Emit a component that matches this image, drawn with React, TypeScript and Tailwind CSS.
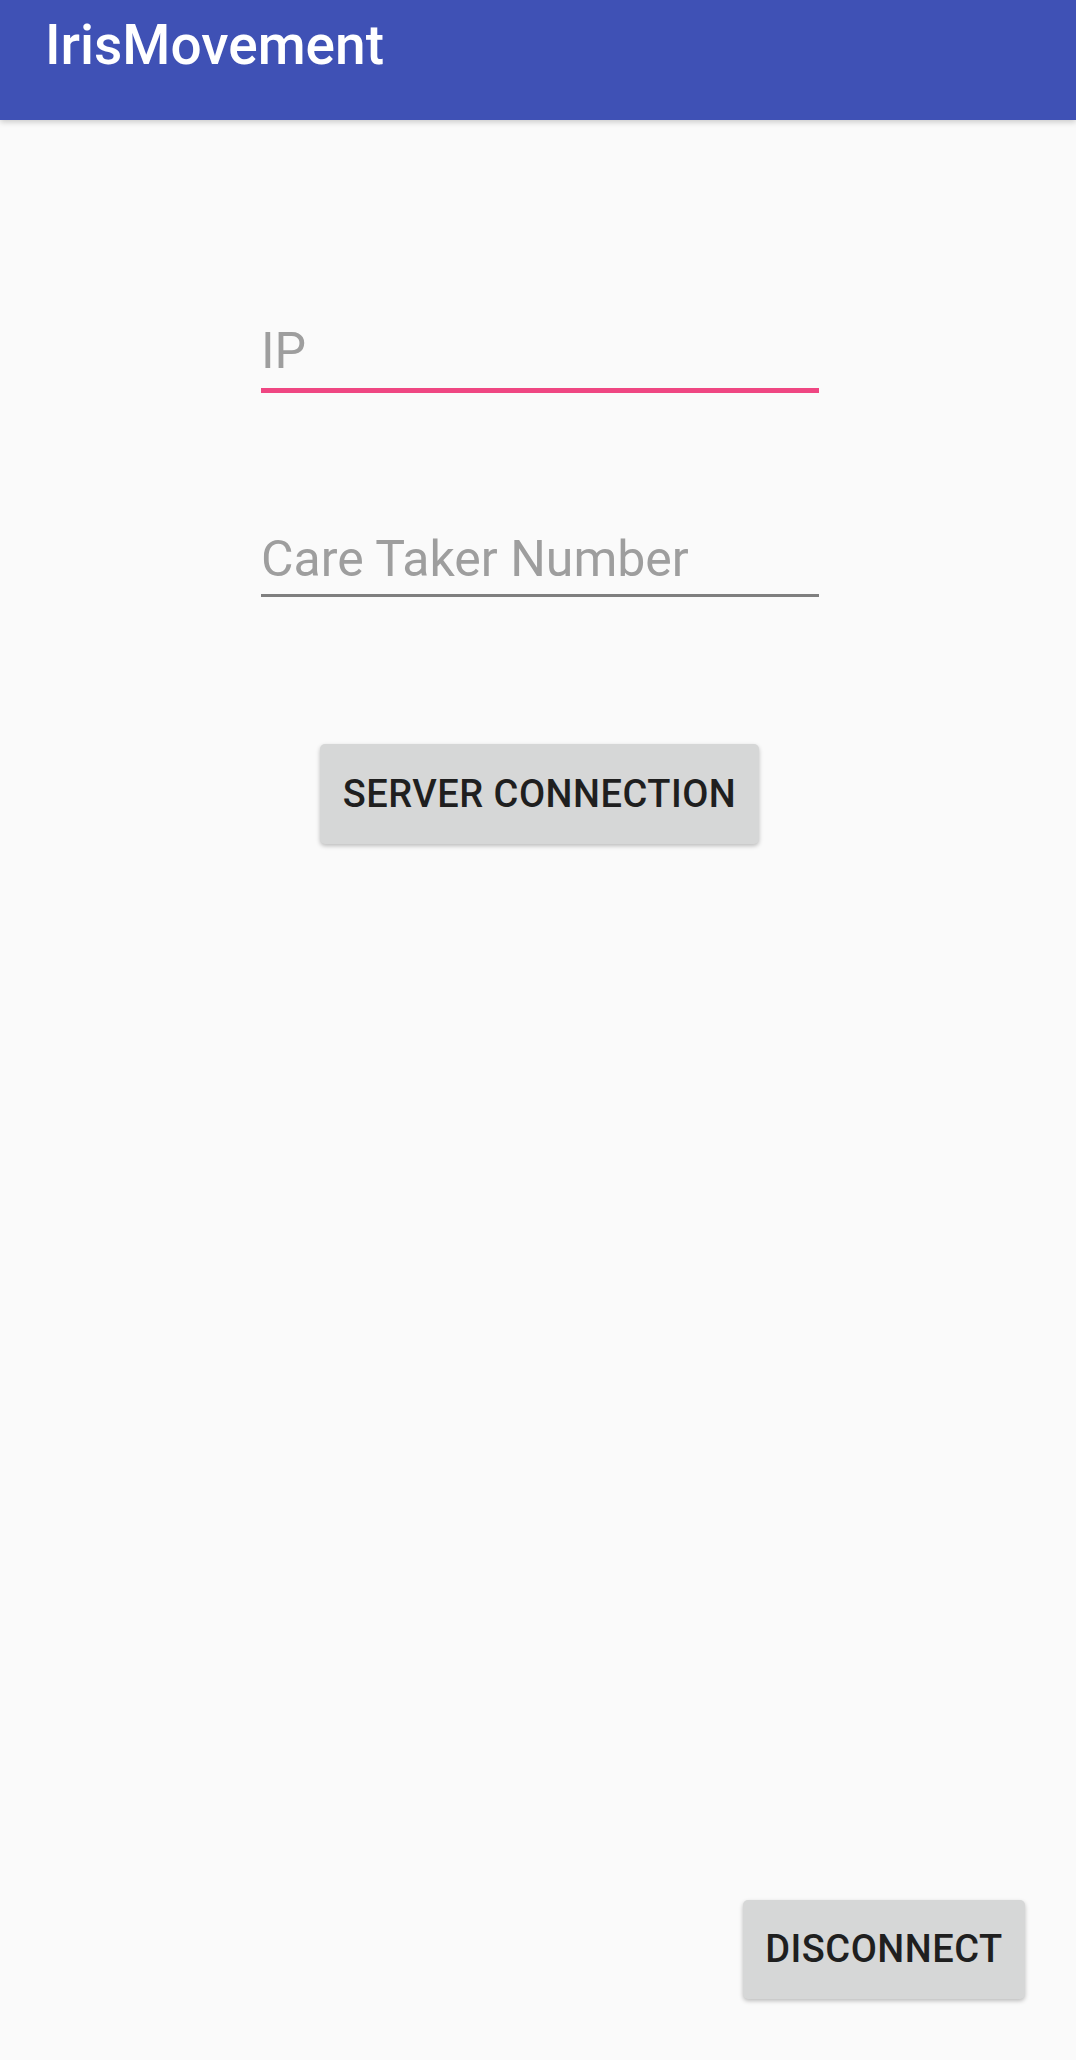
import React from 'react';

const FieldBlock = ({ label, active }: { label: string; active?: boolean }) => {
  return (
    <div className="ml-[261px] w-[558px]">
      <div className="text-[50px] leading-[60px] text-[#9e9e9e]">{label}</div>
      {active ? (
        <div className="mt-[7px] h-[5px] bg-[#ef4682]"></div>
      ) : (
        <div className="mt-[5px] h-[3px] bg-[#7f7f7f]"></div>
      )}
    </div>
  );
};

const App = () => {
  return (
    <div className="flex min-h-[2060px] flex-col bg-[#fafafa] font-['Roboto',sans-serif]">
      <header className="relative z-10 flex h-[120px] shrink-0 bg-[#3f51b5] shadow-[0_2px_6px_rgba(0,0,0,0.2)]">
        <h1 className="ml-[45px] mt-[13px] text-[55px] font-medium leading-[64px] text-white">IrisMovement</h1>
      </header>

      <div className="pt-[201px]">
        <FieldBlock label="IP" active />
      </div>
      <div className="pt-[136px]">
        <FieldBlock label="Care Taker Number" />
      </div>

      <div className="flex justify-center pt-[147px]">
        <button className="ml-[3px] h-[100px] w-[439px] rounded-[5px] bg-[#d6d7d7] text-[38px] font-medium tracking-[0.5px] text-[#1f1f1f] shadow-[0_2px_4px_rgba(0,0,0,0.25)]">
          SERVER CONNECTION
        </button>
      </div>

      <div className="mt-auto flex justify-end pb-[61px] pr-[51px]">
        <button className="h-[99px] w-[282px] rounded-[5px] bg-[#d6d7d7] text-[38px] font-medium tracking-[0.5px] text-[#1f1f1f] shadow-[0_2px_4px_rgba(0,0,0,0.25)]">
          DISCONNECT
        </button>
      </div>
    </div>
  );
};

export default App;
